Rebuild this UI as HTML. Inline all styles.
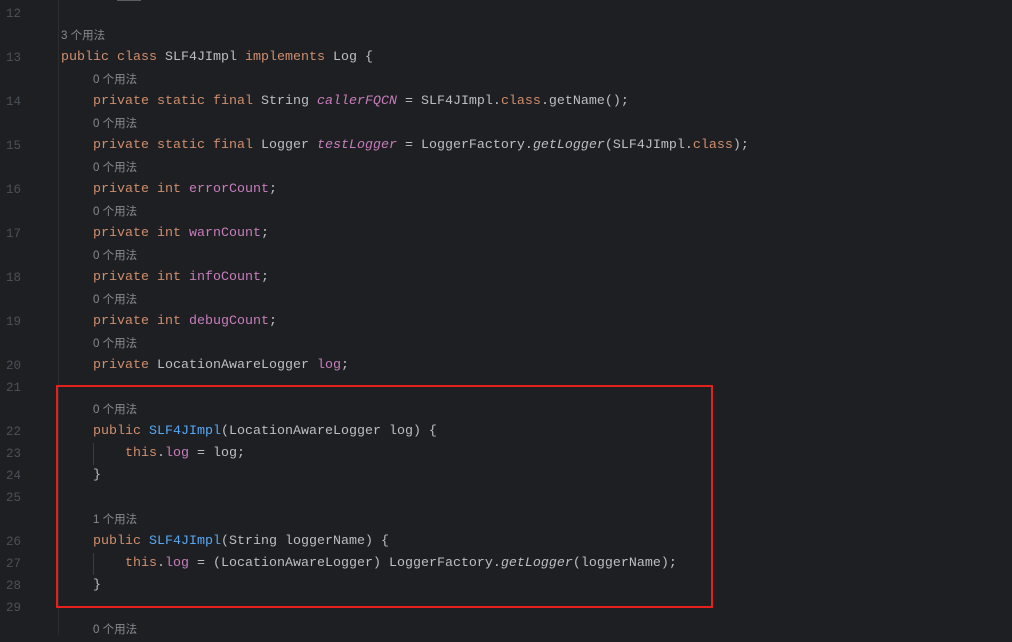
<!DOCTYPE html>
<html><head><meta charset="utf-8"><style>
body{margin:0;background:#1e1f22;width:1012px;height:635px;overflow:hidden;position:relative;font-family:"Liberation Mono","Noto Sans CJK SC",monospace;font-size:13.33px;color:#bcbec4}
.w{position:absolute;left:0;top:2px;width:1012px;height:640px}
.r{position:absolute;left:0;height:22px;line-height:22px;white-space:pre;width:1012px}
.n{position:absolute;left:6px;top:0;color:#4b5059;font-size:12.5px}
.c{position:absolute;left:61px;top:0}
.h{position:absolute;top:0;color:#868a91;font-family:"Liberation Sans","Noto Sans CJK SC",sans-serif;font-size:11.5px}
.k{color:#cf8e6d}.f{color:#c77dbb}.fi{color:#c77dbb;font-style:italic}.i{font-style:italic}.m{color:#56a8f5}
.gl{position:absolute;left:58px;top:0;width:1px;height:635px;background:#2b2d30}
.box{position:absolute;left:56px;top:385px;width:653px;height:219px;border:2px solid #e5201d}
.vl{position:absolute;left:93px;width:1px;background:#393b40}
</style></head><body>
<div class="gl"></div>
<div style="position:absolute;left:117px;top:0;width:24px;height:1px;background:#5a5d63"></div>
<div class="w">
<div class="r" style="top:1px"><span class="n">12</span></div>
<div class="r" style="top:23px"><span class="h" style="left:61px">3 个用法</span></div>
<div class="r" style="top:45px"><span class="n">13</span><span class="c"><span class="k">public class</span> SLF4JImpl <span class="k">implements</span> Log {</span></div>
<div class="r" style="top:67px"><span class="h" style="left:93px">0 个用法</span></div>
<div class="r" style="top:89px"><span class="n">14</span><span class="c">    <span class="k">private static final</span> String <span class="fi">callerFQCN</span> = SLF4JImpl.<span class="k">class</span>.getName();</span></div>
<div class="r" style="top:111px"><span class="h" style="left:93px">0 个用法</span></div>
<div class="r" style="top:133px"><span class="n">15</span><span class="c">    <span class="k">private static final</span> Logger <span class="fi">testLogger</span> = LoggerFactory.<span class="i">getLogger</span>(SLF4JImpl.<span class="k">class</span>);</span></div>
<div class="r" style="top:155px"><span class="h" style="left:93px">0 个用法</span></div>
<div class="r" style="top:177px"><span class="n">16</span><span class="c">    <span class="k">private int</span> <span class="f">errorCount</span>;</span></div>
<div class="r" style="top:199px"><span class="h" style="left:93px">0 个用法</span></div>
<div class="r" style="top:221px"><span class="n">17</span><span class="c">    <span class="k">private int</span> <span class="f">warnCount</span>;</span></div>
<div class="r" style="top:243px"><span class="h" style="left:93px">0 个用法</span></div>
<div class="r" style="top:265px"><span class="n">18</span><span class="c">    <span class="k">private int</span> <span class="f">infoCount</span>;</span></div>
<div class="r" style="top:287px"><span class="h" style="left:93px">0 个用法</span></div>
<div class="r" style="top:309px"><span class="n">19</span><span class="c">    <span class="k">private int</span> <span class="f">debugCount</span>;</span></div>
<div class="r" style="top:331px"><span class="h" style="left:93px">0 个用法</span></div>
<div class="r" style="top:353px"><span class="n">20</span><span class="c">    <span class="k">private</span> LocationAwareLogger <span class="f">log</span>;</span></div>
<div class="r" style="top:375px"><span class="n">21</span></div>
<div class="r" style="top:397px"><span class="h" style="left:93px">0 个用法</span></div>
<div class="r" style="top:419px"><span class="n">22</span><span class="c">    <span class="k">public</span> <span class="m">SLF4JImpl</span>(LocationAwareLogger log) {</span></div>
<div class="r" style="top:441px"><span class="n">23</span><span class="c">        <span class="k">this</span>.<span class="f">log</span> = log;</span></div>
<div class="r" style="top:463px"><span class="n">24</span><span class="c">    }</span></div>
<div class="r" style="top:485px"><span class="n">25</span></div>
<div class="r" style="top:507px"><span class="h" style="left:93px">1 个用法</span></div>
<div class="r" style="top:529px"><span class="n">26</span><span class="c">    <span class="k">public</span> <span class="m">SLF4JImpl</span>(String loggerName) {</span></div>
<div class="r" style="top:551px"><span class="n">27</span><span class="c">        <span class="k">this</span>.<span class="f">log</span> = (LocationAwareLogger) LoggerFactory.<span class="i">getLogger</span>(loggerName);</span></div>
<div class="r" style="top:573px"><span class="n">28</span><span class="c">    }</span></div>
<div class="r" style="top:595px"><span class="n">29</span></div>
<div class="r" style="top:617px"><span class="h" style="left:93px">0 个用法</span></div>
<div class="vl" style="top:441px;height:22px"></div>
<div class="vl" style="top:551px;height:22px"></div>
</div>
<div class="box"></div>
</body></html>
